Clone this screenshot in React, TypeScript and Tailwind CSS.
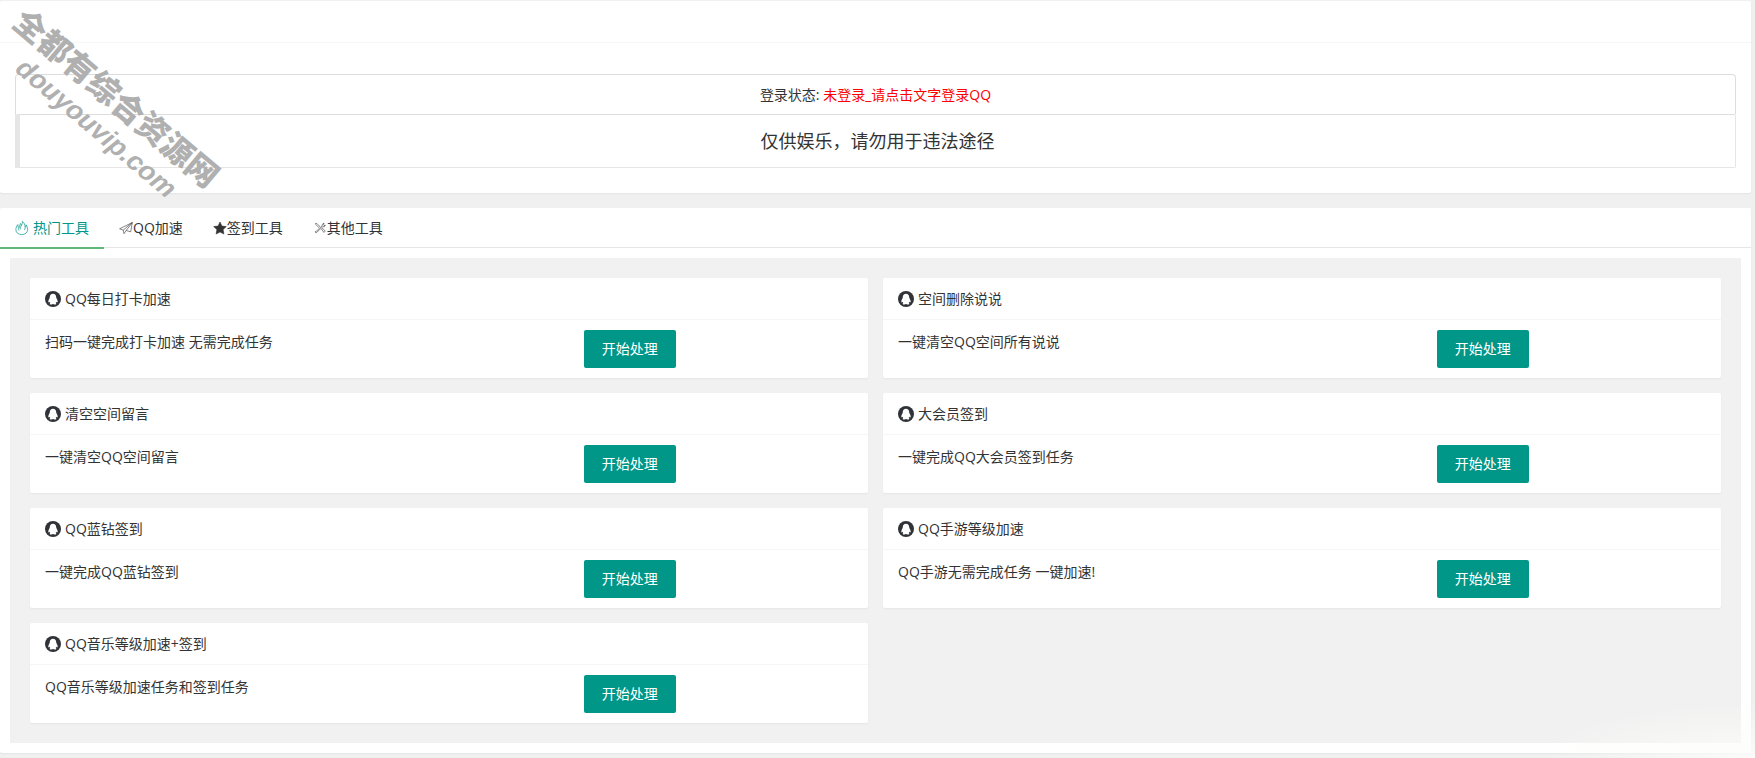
import type { ReactNode } from "react";

interface Tool {
  title: string;
  desc: string;
}

const tools: Tool[] = [
  { title: "QQ每日打卡加速", desc: "扫码一键完成打卡加速 无需完成任务" },
  { title: "空间删除说说", desc: "一键清空QQ空间所有说说" },
  { title: "清空空间留言", desc: "一键清空QQ空间留言" },
  { title: "大会员签到", desc: "一键完成QQ大会员签到任务" },
  { title: "QQ蓝钻签到", desc: "一键完成QQ蓝钻签到" },
  { title: "QQ手游等级加速", desc: "QQ手游无需完成任务 一键加速!" },
  { title: "QQ音乐等级加速+签到", desc: "QQ音乐等级加速任务和签到任务" },
];

function FireIcon() {
  return (
    <svg width="14" height="14" viewBox="0 0 14 14" fill="none" stroke="currentColor" strokeWidth="0.7" strokeLinejoin="round" className="mr-1">
      <path d="M2.800 3.600C1.500 5.400.9 7 .9 8.600c0 3 2.500 5 5.800 5 3.400 0 5.900-2.100 5.900-5.200 0-1.900-.7-3.400-1.500-4.600-.1 1.200-.4 2-.9 2.600C10 3.800 9.300 1.700 7.300.4c.2 2-.3 3.100-1 4.200-.1-.9-.4-1.600-.9-2.100-.2 1.600-1 2.700-1.500 4.200-.7-.9-1.100-1.900-1.100-3.100Z" />
      <path d="M3.900 6.700c-.4 1.100-.4 2 .1 2.900M6.300 4.600C5.500 6 5.200 7 5.500 8.200M10.200 6.400c0 1.100-.3 1.900-.9 2.600" />
    </svg>
  );
}

function PlaneIcon() {
  return (
    <svg width="14" height="14" viewBox="0 0 14 14" fill="none" stroke="currentColor" strokeWidth="0.6" strokeLinejoin="round">
      <path d="M13.300 1.500.6 7.800l3.600 1.300 9.100-7.600ZM13.300 1.500l-1.600 9.300-4.500-1.300 6.100-8ZM4.200 9.100l.8 3.600 2.200-3.200" />
    </svg>
  );
}

function StarIcon() {
  return (
    <svg width="14" height="14" viewBox="0 0 14 14" fill="currentColor">
      <path d="m7 1 1.900 4.100 4.400.5-3.200 3 .8 4.400L7 10.900 3.100 13l.8-4.400-3.200-3 4.400-.5L7 1Z" stroke="currentColor" strokeWidth="0.6" strokeLinejoin="round" />
    </svg>
  );
}

function ToolsIcon() {
  return (
    <svg width="14" height="14" viewBox="0 0 14 14" fill="none" stroke="currentColor" strokeWidth="0.6">
      <path d="M2.500 2.500 3.700 2.300l3 3-1 1-3.100-2.900-.1-.9ZM8.600 8.200l1.100-.9 2.500 2.800-1.300 1.300-2.300-3.200ZM11 2.100 9.300 3.400l-.2 1.500-5.900 5.400-.9.3.2.9.9.2 6.500-6.100 1.400.1 1.100-1.500-1.400.3-.4-.8.4-1.600Z" />
    </svg>
  );
}

function QQIcon() {
  return (
    <svg width="16" height="16" viewBox="0 0 16 16" className="mr-1 shrink-0">
      <circle cx="8" cy="8" r="8" fill="#2f3237" />
      <path
        fill="#fff"
        d="M8 2.700c-2 0-3.200 1.500-3.200 3.400 0 .6-.1 1-.4 1.500-.6 1-1.100 2-1.100 3 0 .7.300 1 .7.600l.5-.5c.2.600.5 1 .9 1.400-.5.200-.7.500-.7.800 0 .5.800.6 1.700.6.700 0 1.300-.2 1.600-.4.300.2.900.4 1.600.4.900 0 1.700-.1 1.700-.6 0-.3-.2-.6-.7-.8.4-.4.700-.8.900-1.400l.5.500c.4.400.7.100.7-.6 0-1-.5-2-1.100-3-.3-.5-.4-.9-.4-1.500 0-1.900-1.200-3.400-3.200-3.400Z"
      />
    </svg>
  );
}

const tabs: { label: string; icon: ReactNode }[] = [
  { label: "热门工具", icon: <FireIcon /> },
  { label: "QQ加速", icon: <PlaneIcon /> },
  { label: "签到工具", icon: <StarIcon /> },
  { label: "其他工具", icon: <ToolsIcon /> },
];

function ToolCard({ title, desc }: Tool) {
  return (
    <section className="rounded-xs bg-white shadow-[0_1px_2px_0_rgba(0,0,0,0.05)]">
      <h2 className="flex h-[42px] items-center border-b border-[#f6f6f6] px-[15px]">
        <QQIcon />
        {title}
      </h2>
      <div className="grid grid-cols-3 px-[15px] py-[10px]">
        <p className="col-span-2 leading-6">{desc}</p>
        <div>
          <button className="h-[38px] cursor-pointer rounded-xs bg-[#009688] px-[18px] text-white">
            开始处理
          </button>
        </div>
      </div>
    </section>
  );
}

function Watermark() {
  return (
    <div className="pointer-events-none absolute top-[2px] left-[30px] origin-top-left rotate-40 font-bold whitespace-nowrap text-[#b0b0b0] select-none">
      <div className="font-['Noto_Sans_CJK_SC',sans-serif] text-[32px] leading-8 font-black">
        全都有综合资源网
      </div>
      <div className="mt-1 ml-8 font-['Liberation_Sans',sans-serif] text-[27px] leading-9 italic">
        douyouvip.com
      </div>
    </div>
  );
}

export default function App() {
  return (
    <div className="relative min-h-screen bg-[#f0f0f0] pt-px pr-1 font-['Open_Sans','Noto_Sans_CJK_SC',sans-serif] text-sm text-[#333]">
      <header className="mb-[15px] rounded-xs bg-white shadow-[0_1px_2px_0_rgba(0,0,0,0.05)]">
        <div className="h-[42px] border-b border-[#f6f6f6]" />
        <div className="px-[15px] pt-[31px] pb-[25px] text-center">
          <div className="flex h-10 items-center justify-center rounded-t border border-b-0 border-[#ddd]">
            <span>
              登录状态:{" "}
              <a href="#login" className="text-[#f00]">
                未登录_请点击文字登录QQ
              </a>
            </span>
          </div>
          <blockquote className="flex h-[54px] items-center justify-center rounded-r-xs border border-l-5 border-[#e6e6e6] border-t-[#ddd] text-lg">
            仅供娱乐，请勿用于违法途径
          </blockquote>
        </div>
      </header>

      <main className="rounded-xs bg-white pb-[10px] shadow-[0_1px_2px_0_rgba(0,0,0,0.05)]">
        <nav className="flex h-10 border-b border-[#e6e6e6]">
          {tabs.map((tab, i) => (
            <button
              key={tab.label}
              className={
                i === 0
                  ? "flex h-[41px] cursor-pointer items-center border-b-2 border-[#5fb878] px-[15px] text-[#009688]"
                  : "flex h-10 cursor-pointer items-center px-[15px]"
              }
            >
              {tab.icon}
              {tab.label}
            </button>
          ))}
        </nav>
        <div className="mx-[10px] mt-[10px] grid grid-cols-2 gap-[15px] bg-[#f1f1f1] p-5">
          {tools.map((tool) => (
            <ToolCard key={tool.title} {...tool} />
          ))}
        </div>
      </main>

      <Watermark />
      <div className="pointer-events-none absolute right-0 bottom-0 h-24 w-96 bg-[radial-gradient(ellipse_at_bottom_right,rgba(252,252,250,0.9),transparent_40%)]" />
    </div>
  );
}
